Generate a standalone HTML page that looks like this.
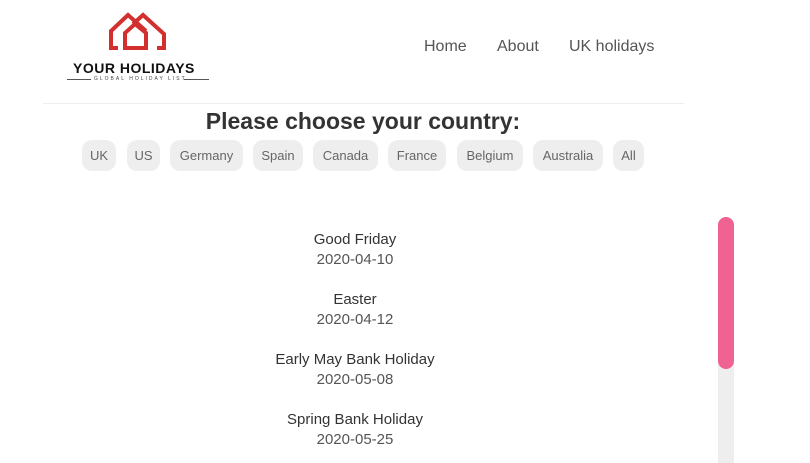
<!DOCTYPE html>
<html><head><style>
html,body{margin:0;width:810px;height:463px;overflow:hidden}
body{background:#fff;font-family:"Liberation Sans",sans-serif;position:relative}
.nav a{position:absolute;top:38px;font-size:16px;color:#555;text-decoration:none}
.hr{position:absolute;left:43px;top:103px;width:641px;height:1px;background:#eee}
h1{position:absolute;top:108px;left:0;width:726px;text-align:center;margin:0;font-size:23px;font-weight:bold;color:#333}
.pill{position:absolute;top:140px;height:31px;line-height:31px;background:#eee;border-radius:10px;font-size:13px;color:#666;text-align:center}
.h{position:absolute;left:0;width:710px;text-align:center;font-size:15px;line-height:20px;color:#333}
.d{color:#555}
</style></head><body>
<svg style="position:absolute;left:100px;top:10px" width="80" height="45" viewBox="100 10 80 45">
<g fill="none" stroke="#d32f2f" stroke-width="4">
<path d="M118 48H111V31L128 15L146 31"/>
<path d="M133 24L143 15L164 34V48H157"/>
<path d="M125 48V33L135 24L146 33V48Z"/>
</g></svg>
<div style="position:absolute;left:73px;top:60px;font-size:14px;font-weight:bold;color:#111;letter-spacing:0.5px">YOUR HOLIDAYS</div>
<div style="position:absolute;left:67px;top:79px;width:24px;height:1px;background:#555"></div>
<div style="position:absolute;left:94px;top:76px;font-size:5px;color:#444;letter-spacing:2px">GLOBAL HOLIDAY LIST</div>
<div style="position:absolute;left:184px;top:79px;width:25px;height:1px;background:#555"></div>
<div class="nav"><a style="left:424px">Home</a><a style="left:497px">About</a><a style="left:569px">UK holidays</a></div>
<div class="hr"></div>
<h1>Please choose your country:</h1>
<div class="pill" style="left:82px;width:34px">UK</div>
<div class="pill" style="left:127px;width:33px">US</div>
<div class="pill" style="left:170px;width:73px">Germany</div>
<div class="pill" style="left:253px;width:50px">Spain</div>
<div class="pill" style="left:313px;width:65px">Canada</div>
<div class="pill" style="left:388px;width:58px">France</div>
<div class="pill" style="left:457px;width:66px">Belgium</div>
<div class="pill" style="left:533px;width:70px">Australia</div>
<div class="pill" style="left:613px;width:31px">All</div>
<div class="h" style="top:230px">Good Friday<br><span class="d">2020-04-10</span></div>
<div class="h" style="top:290px">Easter<br><span class="d">2020-04-12</span></div>
<div class="h" style="top:350px">Early May Bank Holiday<br><span class="d">2020-05-08</span></div>
<div class="h" style="top:410px">Spring Bank Holiday<br><span class="d">2020-05-25</span></div>
<div style="position:absolute;left:718px;top:217px;width:16px;height:246px;border-radius:8px 8px 0 0;background:#eee"></div>
<div style="position:absolute;left:718px;top:217px;width:16px;height:152px;border-radius:8px;background:#f06292"></div>
</body></html>
